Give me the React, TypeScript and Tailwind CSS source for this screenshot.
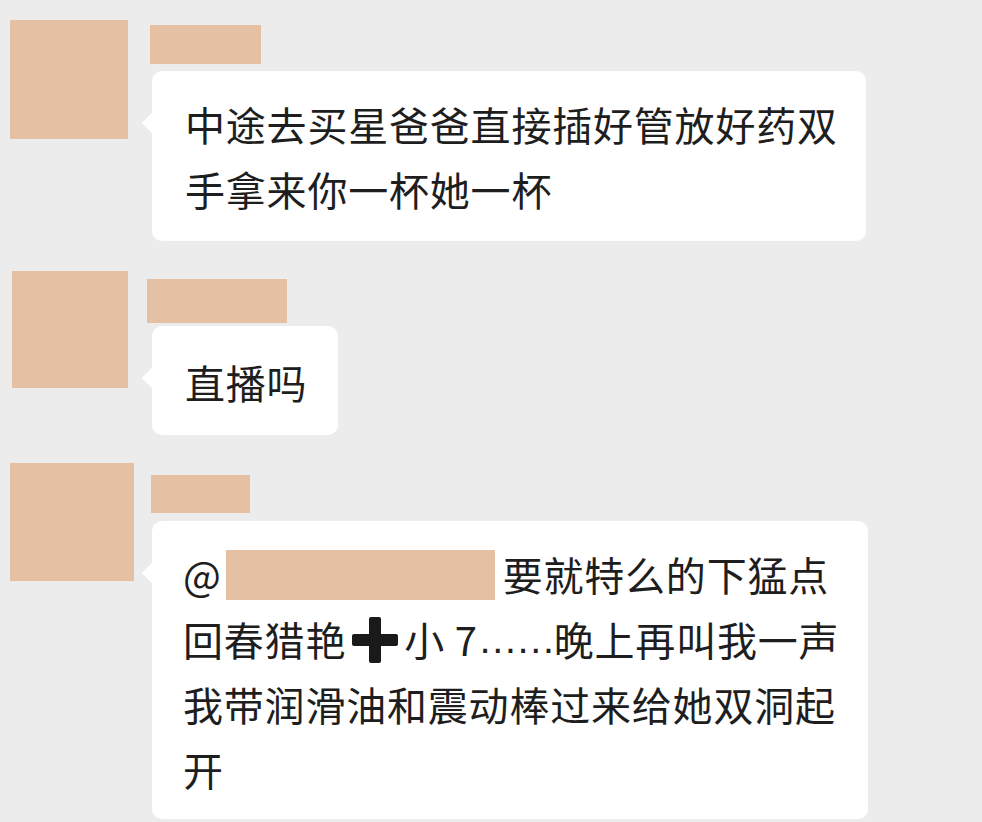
import React from "react";

const font = { fontFamily: '"Noto Sans CJK SC", "Noto Sans", sans-serif' };

function Bubble({ children, className }: { children: React.ReactNode; className: string }) {
  return (
    <div className={`relative rounded-[10px] bg-white text-[40px] tracking-[0.8px] text-[#1e1e1e] ${className}`}>
      <div className="absolute left-[-7px] top-[44px] h-[16px] w-[16px] rotate-45 bg-white" />
      <div className="relative">{children}</div>
    </div>
  );
}

function Line({ children }: { children: React.ReactNode }) {
  return <div className="flex h-[65px] items-center whitespace-nowrap leading-[65px]">{children}</div>;
}

export default function App() {
  return (
    <div className="h-[822px] w-[982px] overflow-hidden bg-[#ececec]" style={font}>
      {/* Message 1 */}
      <div className="flex pt-[20px]">
        <div className="w-[147px] shrink-0">
          <div className="ml-[10px] h-[119px] w-[118px] bg-[#e6c0a3]" />
        </div>
        <div className="flex flex-col">
          <div className="ml-[3px] mt-[5px] h-[39px] w-[111px] bg-[#e6c0a3]" />
          <Bubble className="ml-[5px] mt-[7px] w-[714px] pl-[33px] pt-[21px] pb-[19px]">
            <Line>中途去买星爸爸直接插好管放好药双</Line>
            <Line>手拿来你一杯她一杯</Line>
          </Bubble>
        </div>
      </div>

      {/* Message 2 */}
      <div className="flex pt-[30px]">
        <div className="w-[147px] shrink-0">
          <div className="ml-[12px] h-[117px] w-[116px] bg-[#e6c0a3]" />
        </div>
        <div className="flex flex-col">
          <div className="mt-[8px] h-[44px] w-[140px] bg-[#e6c0a3]" />
          <Bubble className="ml-[5px] mt-[3px] w-[186px] pl-[33px] pt-[24px] pb-[20px]">
            <Line>直播吗</Line>
          </Bubble>
        </div>
      </div>

      {/* Message 3 */}
      <div className="flex pt-[28px]">
        <div className="w-[147px] shrink-0">
          <div className="ml-[10px] h-[118px] w-[124px] bg-[#e6c0a3]" />
        </div>
        <div className="flex flex-col">
          <div className="ml-[4px] mt-[12px] h-[38px] w-[99px] bg-[#e6c0a3]" />
          <Bubble className="ml-[5px] mt-[8px] w-[716px] pl-[31px] pt-[21px] pb-[17px]">
            <Line>
              <span>@</span>
              <span className="ml-[4px] mr-[8px] inline-block h-[50px] w-[269px] bg-[#e6c0a3]" />
              <span>要就特么的下猛点</span>
            </Line>
            <Line>
              <span>回春猎艳</span>
              <svg width="46" height="46" viewBox="0 0 46 46" className="ml-[6px] mr-[6px]">
                <rect x="17" y="0" width="12" height="46" rx="2" fill="#1a1a1a" />
                <rect x="0" y="17" width="46" height="12" rx="2" fill="#1a1a1a" />
              </svg>
              <span>小 7</span>
              <span className="tracking-[-2px]" style={{ fontFamily: '"Liberation Sans", sans-serif' }}>……</span>
              <span>晚上再叫我一声</span>
            </Line>
            <Line>我带润滑油和震动棒过来给她双洞起</Line>
            <Line>开</Line>
          </Bubble>
        </div>
      </div>
    </div>
  );
}
